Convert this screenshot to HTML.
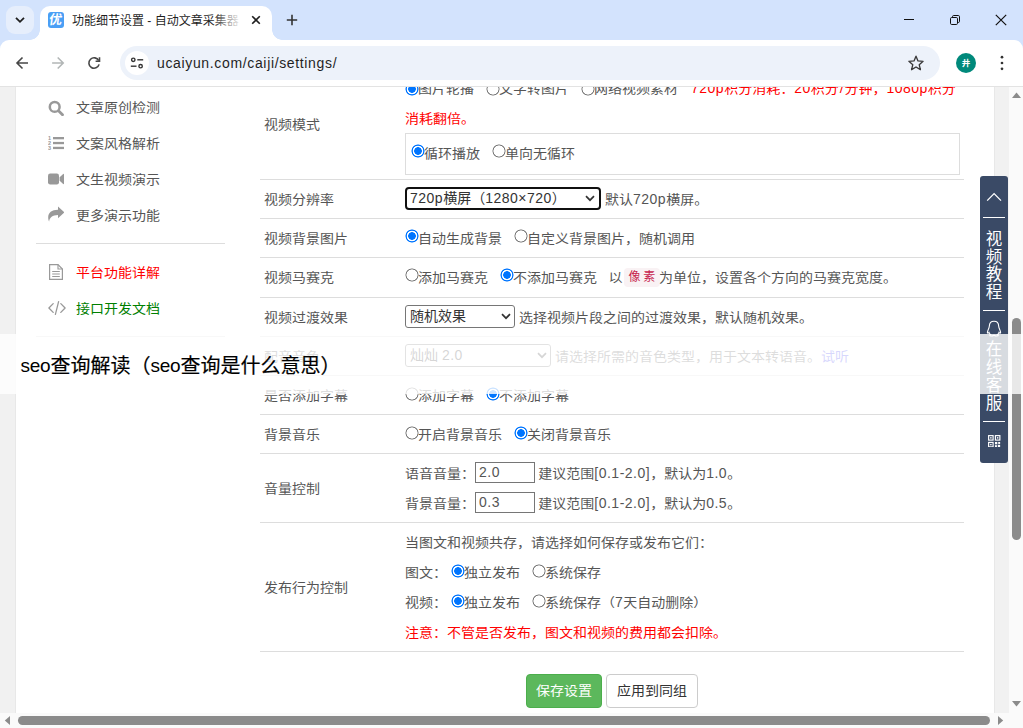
<!DOCTYPE html>
<html lang="zh-CN">
<head>
<meta charset="utf-8">
<title>功能细节设置 - 自动文章采集器</title>
<style>
*{box-sizing:border-box;margin:0;padding:0}
html,body{width:1023px;height:728px;overflow:hidden;background:#fff}
body{position:relative;font-family:"Liberation Sans","Noto Sans CJK SC",sans-serif;font-size:14px;color:#555}
.abs,.t,.ln,.rd,.hl{position:absolute}
.t{white-space:nowrap;line-height:20px;height:20px;font-size:14px;transform:scaleY(.9);transform-origin:50% 55%}
/* ---------- browser chrome ---------- */
#tabstrip{left:0;top:0;width:1023px;height:52px;background:#d3e3fd}
#tabsearch{left:6px;top:6px;width:28px;height:28px;border-radius:9px;background:#e6eefc}
#tab{left:40px;top:6px;width:232px;height:34px;background:#fff;border-radius:10px 10px 0 0}
#tab:before,#tab:after{content:"";position:absolute;bottom:0;width:10px;height:10px}
#tab:before{left:-10px;background:radial-gradient(circle at 0 0,rgba(255,255,255,0) 9.5px,#fff 10px)}
#tab:after{right:-10px;background:radial-gradient(circle at 100% 0,rgba(255,255,255,0) 9.5px,#fff 10px)}
#toolbar{left:0;top:40px;width:1023px;height:46px;background:#fff;border-radius:9px 9px 0 0}
#tbline{left:0;top:86px;width:1023px;height:1px;background:#e3e3e3}
#url{left:120px;top:46px;width:820px;height:34px;border-radius:17px;background:#edf2fa}
#urlchip{left:125px;top:51px;width:24px;height:24px;border-radius:12px;background:#fff}
/* ---------- page ---------- */
#page{left:0;top:87px;width:1009px;height:626px;background:#fff}
#lstrip{left:0;top:87px;width:16px;height:626px;background:#f1f1f1;border-right:1px solid #e8e8e8}
#rstrip{left:994px;top:87px;width:15px;height:626px;background:#f1f1f1;border-left:1px solid #e8e8e8}
#vscroll{left:1009px;top:87px;width:14px;height:641px;background:#fafafa}
#hscroll{left:0;top:713px;width:1023px;height:15px;background:#fafafa}
.ln{height:1px;background:#ddd;left:260px;width:704px}
.l{letter-spacing:.5px;font-size:14px}
.t .l{display:inline-block;transform:scaleY(1.111);transform-origin:50% 60%}
#tabtitle,#bandtext,#urltext{transform:none}
.se{font-size:19px;font-weight:400;letter-spacing:-.2px;-webkit-text-stroke:0;position:relative;top:-.8px}

.lb{color:#555}
.red{color:#f00}
.rd{width:13px;height:13px}
.rd:before{content:"";position:absolute;left:-.5px;top:-.5px;width:14px;height:14px;background:radial-gradient(circle at 50% 50%,#fff 0,#fff 5.3px,#767676 5.8px,#767676 6.2px,rgba(118,118,118,0) 6.8px)}
.rd.on:before{background:radial-gradient(circle at 50% 50%,#0075ff 0,#0075ff 3.5px,#fff 4.1px,#fff 5px,#0075ff 5.6px,#0075ff 6.2px,rgba(0,117,255,0) 6.8px)}
.sel{position:absolute;height:23px;border:1px solid #767676;border-radius:3px;background:#fff;color:#333;line-height:21px;padding-left:4px;white-space:nowrap;font-size:14px}
.sel svg{position:absolute;right:3.5px;top:7px}
.inp{position:absolute;height:21px;border:1px solid #767676;background:#fff;color:#555;line-height:19px;padding-left:3px;font-size:14px}
.ic{position:absolute}
</style>
</head>
<body>
<!-- PAGE BACKGROUND -->
<div class="abs" id="page"></div>
<div class="abs" id="lstrip"></div>
<div class="abs" id="rstrip"></div>
<!--SIDEBAR-->
<svg class="ic" style="left:48px;top:99.7px" width="16" height="16" viewBox="0 0 16 16"><circle cx="6.7" cy="6.9" r="4.9" fill="none" stroke="#999" stroke-width="2.5"/><path d="M11 11.2 L14.5 14.7" stroke="#999" stroke-width="2.8" stroke-linecap="round"/></svg>
<div class="t lb" style="left:76px;top:97px">文章原创检测</div>
<svg class="ic" style="left:48px;top:135px" width="16" height="16" viewBox="0 0 16 16"><g fill="#999"><rect x="5" y="2" width="11" height="2.3"/><rect x="5" y="6.9" width="11" height="2.3"/><rect x="5" y="11.8" width="11" height="2.3"/></g><g font-family="Liberation Sans,sans-serif" font-size="5.5" font-weight="bold" fill="#999"><text x="0" y="4.6">1</text><text x="0" y="9.8">2</text><text x="0" y="15">3</text></g></svg>
<div class="t lb" style="left:76px;top:133px">文案风格解析</div>
<svg class="ic" style="left:48px;top:171px" width="16" height="16" viewBox="0 0 16 16"><rect x="0" y="2.5" width="11" height="11" rx="2.2" fill="#999"/><path d="M11.6 6.2 L15.2 2.9 Q16 2.6 16 3.5 V12.5 Q16 13.4 15.2 13.1 L11.6 9.8 Z" fill="#999"/></svg>
<div class="t lb" style="left:76px;top:169px">文生视频演示</div>
<svg class="ic" style="left:48px;top:206px" width="16" height="16" viewBox="0 0 16 16"><path d="M16.4 6.3 L10 0.4 V3.8 C3.6 3.8 0.2 6.8 0.2 11.6 C0.2 13.2 0.6 14.6 1.1 15.5 C1.7 11.2 4.4 9 10 8.9 V12.2 Z" fill="#999"/></svg>
<div class="t lb" style="left:76px;top:205px">更多演示功能</div>
<div class="ln" style="left:36px;width:189px;top:243px"></div>
<svg class="ic" style="left:49px;top:264px" width="14" height="16" viewBox="0 0 14 16"><path d="M0.6 0.6 H9 L13.4 5 V15.4 H0.6 Z" fill="none" stroke="#999" stroke-width="1.2"/><path d="M9 0.6 V5 H13.4" fill="none" stroke="#999" stroke-width="1.1"/><path d="M3.2 7.5 H10.8 M3.2 10 H10.8 M3.2 12.5 H10.8" stroke="#999" stroke-width="1.1"/></svg>
<div class="t" style="left:76px;top:262px;color:#f00">平台功能详解</div>
<svg class="ic" style="left:48px;top:300px" width="18" height="16" viewBox="0 0 18 16"><path d="M5.2 3.6 L0.9 8 L5.2 12.4 M12.8 3.6 L17.1 8 L12.8 12.4 M10.6 1.6 L7.4 14.4" fill="none" stroke="#999" stroke-width="1.3" stroke-linecap="round" stroke-linejoin="round"/></svg>
<div class="t" style="left:76px;top:298px;color:#008000">接口开发文档</div>
<div class="ln" style="left:36px;width:189px;top:336px"></div>
<!--TABLE-->
<!-- row: 视频模式 -->
<div class="rd on" style="left:405px;top:82px"></div>
<div class="t" style="left:418px;top:78px">图片轮播</div>
<div class="rd" style="left:486px;top:82px"></div>
<div class="t" style="left:499px;top:78px">文字转图片</div>
<div class="rd" style="left:581px;top:82px"></div>
<div class="t" style="left:594px;top:78px">网络视频素材</div>
<div class="t red" style="left:691px;top:78px"><span class="l">720p</span>积分消耗：<span class="l">20</span>积分<span style="padding:0 .9px">/</span>分钟，<span class="l">1080p</span>积分</div>
<div class="t red" style="left:405px;top:108px">消耗翻倍。</div>
<div class="abs" style="left:405px;top:133px;width:555px;height:42px;border:1px solid #ddd"></div>
<div class="rd on" style="left:411px;top:144.7px"></div>
<div class="t" style="left:424px;top:143px">循环播放</div>
<div class="rd" style="left:492px;top:144.7px"></div>
<div class="t" style="left:505px;top:143px">单向无循环</div>
<div class="t lb" style="left:264px;top:114px">视频模式</div>
<div class="ln" style="top:179px"></div>
<!-- row: 视频分辨率 -->
<div class="t lb" style="left:264px;top:189px">视频分辨率</div>
<div class="sel" style="left:405px;top:187px;width:196px;border:2px solid #101010;border-radius:4px;line-height:19px;padding-left:3px"><span class="l">720p</span>横屏（<span class="l">1280×720</span>）<svg width="10" height="7" viewBox="0 0 10 7" style="right:4px;top:6px"><path d="M1 1.2 L5 5.2 L9 1.2" fill="none" stroke="#333" stroke-width="1.7"/></svg></div>
<div class="t" style="left:605px;top:189px">默认<span class="l">720p</span>横屏。</div>
<div class="ln" style="top:218px"></div>
<!-- row: 视频背景图片 -->
<div class="t lb" style="left:264px;top:228px">视频背景图片</div>
<div class="rd on" style="left:405px;top:229.3px"></div>
<div class="t" style="left:418px;top:228px">自动生成背景</div>
<div class="rd" style="left:514px;top:229.3px"></div>
<div class="t" style="left:527px;top:228px">自定义背景图片，随机调用</div>
<div class="ln" style="top:257px"></div>
<!-- row: 视频马赛克 -->
<div class="t lb" style="left:264px;top:267px">视频马赛克</div>
<div class="rd" style="left:405px;top:268.5px"></div>
<div class="t" style="left:418px;top:267px">添加马赛克</div>
<div class="rd on" style="left:500px;top:268.5px"></div>
<div class="t" style="left:513px;top:267px">不添加马赛克</div>
<div class="t" style="left:608.5px;top:267px">以</div>
<div class="abs" style="left:624px;top:268px;width:35.5px;height:18.5px;border-radius:4px;background:#f9f2f4"></div>
<div class="t" style="left:628.5px;top:268px;font-size:12px;color:#c7254e;letter-spacing:2.7px;transform:none;font-family:'Liberation Mono','Noto Sans CJK SC',monospace">像素</div>
<div class="t" style="left:659px;top:267px">为单位，设置各个方向的马赛克宽度。</div>
<div class="ln" style="top:297px"></div>
<!-- row: 视频过渡效果 -->
<div class="t lb" style="left:264px;top:307px">视频过渡效果</div>
<div class="sel" style="left:405px;top:305px;width:110px">随机效果<svg width="10" height="7" viewBox="0 0 10 7"><path d="M1 1.2 L5 5.2 L9 1.2" fill="none" stroke="#333" stroke-width="1.7"/></svg></div>
<div class="t" style="left:519px;top:307px">选择视频片段之间的过渡效果，默认随机效果。</div>
<div class="ln" style="top:336px"></div>
<!-- row: 配音音色 -->
<div class="t lb" style="left:264px;top:346px">配音音色</div>
<div class="sel" style="left:405px;top:344px;width:146px">灿灿 <span class="l">2.0</span><svg width="10" height="7" viewBox="0 0 10 7"><path d="M1 1.2 L5 5.2 L9 1.2" fill="none" stroke="#333" stroke-width="1.7"/></svg></div>
<div class="t" style="left:555px;top:346px">请选择所需的音色类型，用于文本转语音。<span style="color:#3a3af0">试听</span></div>
<div class="ln" style="top:375px"></div>
<!-- row: 是否添加字幕 -->
<div class="t lb" style="left:264px;top:385px">是否添加字幕</div>
<div class="rd" style="left:405px;top:387.3px"></div>
<div class="t" style="left:418px;top:385px">添加字幕</div>
<div class="rd on" style="left:486px;top:387.3px"></div>
<div class="t" style="left:499px;top:385px">不添加字幕</div>
<div class="ln" style="top:414px"></div>
<!-- row: 背景音乐 -->
<div class="t lb" style="left:264px;top:424px">背景音乐</div>
<div class="rd" style="left:405px;top:426.3px"></div>
<div class="t" style="left:418px;top:424px">开启背景音乐</div>
<div class="rd on" style="left:514px;top:426.3px"></div>
<div class="t" style="left:527px;top:424px">关闭背景音乐</div>
<div class="ln" style="top:453px"></div>
<!-- row: 音量控制 -->
<div class="t lb" style="left:264px;top:478px">音量控制</div>
<div class="t" style="left:405px;top:463px">语音音量：</div>
<div class="inp" style="left:475px;top:462.4px;width:60px"><span class="l">2.0</span></div>
<div class="t" style="left:538.3px;top:463px">建议范围<span class="l">[0.1-2.0]</span>，默认为<span class="l">1.0</span>。</div>
<div class="t" style="left:405px;top:493px">背景音量：</div>
<div class="inp" style="left:475px;top:492.4px;width:60px"><span class="l">0.3</span></div>
<div class="t" style="left:538.3px;top:493px">建议范围<span class="l">[0.1-2.0]</span>，默认为<span class="l">0.5</span>。</div>
<div class="ln" style="top:522px"></div>
<!-- row: 发布行为控制 -->
<div class="t lb" style="left:264px;top:577px">发布行为控制</div>
<div class="t" style="left:405px;top:532px">当图文和视频共存，请选择如何保存或发布它们：</div>
<div class="t" style="left:405px;top:562px">图文：</div>
<div class="rd on" style="left:451px;top:564.3px"></div>
<div class="t" style="left:464px;top:562px">独立发布</div>
<div class="rd" style="left:532px;top:564.3px"></div>
<div class="t" style="left:545px;top:562px">系统保存</div>
<div class="t" style="left:405px;top:592px">视频：</div>
<div class="rd on" style="left:451px;top:594.3px"></div>
<div class="t" style="left:464px;top:592px">独立发布</div>
<div class="rd" style="left:532px;top:594.3px"></div>
<div class="t" style="left:545px;top:592px">系统保存（<span class="l">7</span>天自动删除）</div>
<div class="t red" style="left:405px;top:622px">注意：不管是否发布，图文和视频的费用都会扣除。</div>
<div class="ln" style="top:651px"></div>
<!-- buttons -->
<div class="abs" style="left:526px;top:673.6px;width:76px;height:34px;border-radius:4px;background:#5cb85c;border:1px solid #4cae4c;color:#fff;text-align:center;line-height:32px;font-size:14px"><span style="display:inline-block;transform:scaleY(.9)">保存设置</span></div>
<div class="abs" style="left:606px;top:673.6px;width:92px;height:34px;border-radius:4px;background:#fff;border:1px solid #ccc;color:#333;text-align:center;line-height:32px;font-size:14px"><span style="display:inline-block;transform:scaleY(.9)">应用到同组</span></div>
<!--WIDGET-->
<div class="abs" id="widget" style="left:980px;top:176px;width:28px;height:287px;background:#3a4a66;border-radius:3px"></div>
<svg class="ic" style="left:984px;top:190px" width="20" height="12" viewBox="0 0 20 12"><path d="M3.2 10.6 L10.1 3.6 L17 10.6" fill="none" stroke="#fff" stroke-width="1.3"/></svg>
<div class="abs" style="left:983px;top:217px;width:22px;height:1px;background:#fff"></div>
<div class="abs" style="left:985px;top:231px;width:18px;font-size:16.5px;line-height:17.6px;color:#fff;text-align:center">视频教程</div>
<div class="abs" style="left:983px;top:310px;width:22px;height:1px;background:#fff"></div>
<svg class="ic" style="left:986.2px;top:319.7px" width="16" height="17" viewBox="0 0 16 17"><path d="M8 1.3 C4.6 1.3 3.4 3.8 3.3 6.2 C3.2 8.6 1.6 10.2 1.4 12.4 C1.3 13.4 2.2 13.4 3 12.4 C3.4 13.4 4 14.2 4.6 14.6 C3.4 15 3.4 16 5 16 C6.4 16 7.4 15.6 8 15.2 C8.6 15.6 9.6 16 11 16 C12.6 16 12.6 15 11.4 14.6 C12 14.2 12.6 13.4 13 12.4 C13.8 13.4 14.7 13.4 14.6 12.4 C14.4 10.2 12.8 8.6 12.7 6.2 C12.6 3.8 11.4 1.3 8 1.3 Z" fill="none" stroke="#fff" stroke-width="1.1"/></svg>
<div class="abs" style="left:985px;top:339.5px;width:18px;font-size:16.5px;line-height:18.2px;color:#fff;text-align:center">在线客服</div>
<div class="abs" style="left:983px;top:421px;width:22px;height:1px;background:#fff"></div>
<svg class="ic" style="left:988px;top:434.5px" width="12.5" height="12.5" viewBox="0 0 14 14"><g fill="none" stroke="#fff" stroke-width="1.3"><rect x="0.7" y="0.7" width="5" height="5"/><rect x="8.3" y="0.7" width="5" height="5"/><rect x="0.7" y="8.3" width="5" height="5"/></g><g fill="#fff"><rect x="2.4" y="2.4" width="1.6" height="1.6"/><rect x="10" y="2.4" width="1.6" height="1.6"/><rect x="2.4" y="10" width="1.6" height="1.6"/><rect x="7.8" y="7.8" width="2.6" height="2.6"/><rect x="11.4" y="7.8" width="2.2" height="2.2"/><rect x="7.8" y="11.4" width="2.2" height="2.2"/><rect x="11" y="11" width="2.6" height="2.6"/></g></svg>
<!--SCROLLBARS-->
<div class="abs" id="vscroll"></div>
<div class="abs" id="hscroll"></div>
<svg class="ic" style="left:1009px;top:87px" width="14" height="641" viewBox="0 0 14 641"><path d="M3 11 L7.5 5.6 L12 11 Z" fill="#8b8b8b"/><rect x="3" y="231" width="9" height="222" rx="4.5" fill="#8b8b8b"/><path d="M3 614 L12 614 L7.5 619.4 Z" fill="#8b8b8b"/></svg>
<svg class="ic" style="left:0;top:713px" width="1009" height="15" viewBox="0 0 1009 15"><path d="M10 3 L10 12 L4.8 7.5 Z" fill="#8b8b8b"/><rect x="18" y="3" width="972" height="9" rx="4.5" fill="#8b8b8b"/><path d="M998 3 L998 12 L1003.2 7.5 Z" fill="#8b8b8b"/></svg>
<!--BAND-->
<div class="abs" id="band" style="left:0;top:334px;width:1023px;height:60px;background:rgba(255,255,255,.8)"></div>
<div class="t" id="bandtext" style="left:20.4px;top:353.7px;height:24px;line-height:24px;font-size:20px;color:#000;font-weight:400;-webkit-text-stroke:.18px #000;font-family:'Liberation Sans','Noto Sans CJK SC',sans-serif"><span class="se">seo</span>查询解读（<span class="se">seo</span>查询是什么意思）</div>
<!-- BROWSER CHROME -->
<div class="abs" id="tabstrip"></div>
<div class="abs" id="tabsearch"></div>
<div class="abs" id="toolbar"></div>
<div class="abs" id="tab"></div>
<div class="abs" id="tbline"></div>
<div class="abs" id="url"></div>
<div class="abs" id="urlchip"></div>
<!--CHROMEICONS-->
<svg class="ic" style="left:14px;top:15px" width="12" height="10" viewBox="0 0 12 10"><path d="M2 2.8 L6 6.8 L10 2.8" fill="none" stroke="#1f1f1f" stroke-width="1.8"/></svg>
<div class="abs" style="left:48px;top:12px;width:16px;height:16px;border-radius:3px;background:#4a9ff5;color:#fff;font-size:13px;line-height:15.5px;text-align:center;font-weight:bold;overflow:hidden"><span style="display:inline-block;transform:skewX(-8deg)">优</span></div>
<div class="t" id="tabtitle" style="left:72px;top:11px;width:170px;overflow:hidden;font-size:12px;color:#1f1f1f">功能细节设置 - 自动文章采集器</div>
<div class="abs" style="left:212px;top:11px;width:30px;height:20px;background:linear-gradient(90deg,rgba(255,255,255,0),#fff)"></div>
<svg class="ic" style="left:250px;top:14px" width="12" height="12" viewBox="0 0 12 12"><path d="M2.2 2.2 L9.8 9.8 M9.8 2.2 L2.2 9.8" stroke="#1f1f1f" stroke-width="1.6"/></svg>
<svg class="ic" style="left:285px;top:13px" width="14" height="14" viewBox="0 0 14 14"><path d="M7 1.8 V12.2 M1.8 7 H12.2" stroke="#333" stroke-width="1.6"/></svg>
<svg class="ic" style="left:903px;top:14px" width="12" height="12" viewBox="0 0 12 12"><path d="M1 5.5 H11" stroke="#111" stroke-width="1"/></svg>
<svg class="ic" style="left:949px;top:14px" width="12" height="12" viewBox="0 0 12 12"><rect x="1.5" y="3.5" width="7" height="7" rx="1.2" fill="none" stroke="#111" stroke-width="1"/><path d="M3.5 3.2 V2.7 Q3.5 1.5 4.7 1.5 H9.3 Q10.5 1.5 10.5 2.7 V7.3 Q10.5 8.5 9.3 8.5 H8.8" fill="none" stroke="#111" stroke-width="1"/></svg>
<svg class="ic" style="left:995px;top:14px" width="12" height="12" viewBox="0 0 12 12"><path d="M0.8 0.8 L11.2 11.2 M11.2 0.8 L0.8 11.2" stroke="#111" stroke-width="1.2"/></svg>
<svg class="ic" style="left:14px;top:55px" width="16" height="16" viewBox="0 0 16 16"><path d="M14 8 H3.4 M8.5 2.5 L3 8 L8.5 13.5" fill="none" stroke="#474747" stroke-width="1.6"/></svg>
<svg class="ic" style="left:50px;top:55px" width="16" height="16" viewBox="0 0 16 16"><path d="M2.1 8 H12.8 M7.7 2.5 L13.2 8 L7.7 13.5" fill="none" stroke="#b2b6b6" stroke-width="1.6"/></svg>
<svg class="ic" style="left:86px;top:55px" width="16" height="16" viewBox="0 0 16 16"><path d="M12.7 5.6 A5.2 5.2 0 1 0 13.1 9.4" fill="none" stroke="#474747" stroke-width="1.6"/><path d="M13.5 2.3 V6.2 H9.6" fill="none" stroke="#474747" stroke-width="1.6"/></svg>
<svg class="ic" style="left:130px;top:56px" width="14" height="14" viewBox="0 0 14 14"><g fill="none" stroke="#333" stroke-width="1.4"><circle cx="3.3" cy="3.8" r="1.7"/><path d="M7.3 3.8 H13.2"/><circle cx="10.6" cy="10.2" r="1.7"/><path d="M0.8 10.2 H6.5"/></g></svg>
<div class="t" id="urltext" style="left:157px;top:53px;font-size:14px;color:#1f1f1f;letter-spacing:.65px">ucaiyun.com/caiji/settings/</div>
<svg class="ic" style="left:907px;top:54px" width="18" height="18" viewBox="0 0 18 18"><path d="M9 2.2 L11 6.9 L16.1 7.3 L12.2 10.7 L13.4 15.7 L9 13 L4.6 15.7 L5.8 10.7 L1.9 7.3 L7 6.9 Z" fill="none" stroke="#3a3a3a" stroke-width="1.35" stroke-linejoin="round"/></svg>
<div class="abs" style="left:956px;top:53px;width:20px;height:20px;border-radius:50%;background:#00897b;color:#fff;font-size:8.5px;font-weight:bold;line-height:20px;text-align:center">井</div>
<svg class="ic" style="left:999px;top:54px" width="6" height="18" viewBox="0 0 6 18"><g fill="#333"><circle cx="3" cy="3.2" r="1.35"/><circle cx="3" cy="9" r="1.35"/><circle cx="3" cy="14.8" r="1.35"/></g></svg>
</body>
</html>
